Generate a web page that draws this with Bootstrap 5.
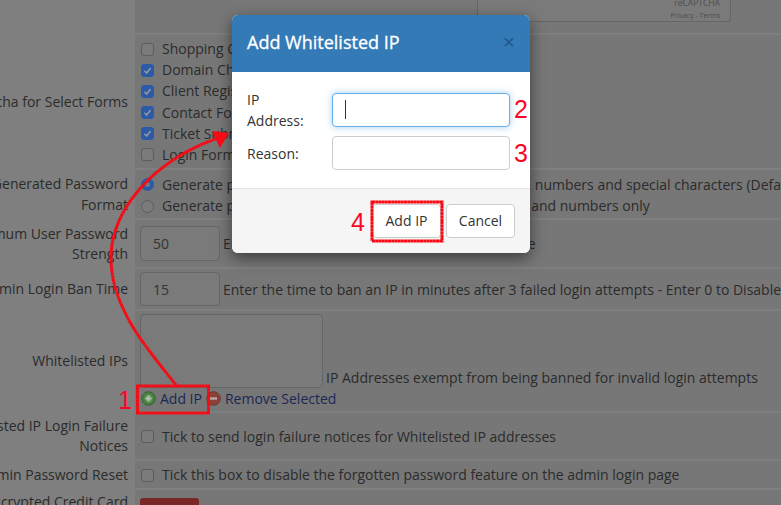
<!DOCTYPE html>
<html lang="en">
<head>
<meta charset="utf-8">
<title>Add Whitelisted IP</title>
<link rel="stylesheet" href="https://cdn.jsdelivr.net/npm/bootstrap@5.3.0/dist/css/bootstrap.min.css">
<style>
html,body{height:505px;overflow:hidden;background:#7f7f7f}
body{font-family:"Open Sans","Liberation Sans",sans-serif;font-size:14px;line-height:21px;color:#2b2b2b}
.stage{position:relative;width:781px;height:505px;overflow:hidden}
.cfg{margin-left:-72px;width:900px}
.cfg-row{display:flex;align-items:stretch}
.cfg-label{width:207px;flex:none;text-align:right;padding:0 7px 2px 0;line-height:20px;white-space:nowrap;align-self:center}
.cfg-field{flex:1;background:#777;border-bottom:2px solid #7f7f7f;padding-left:5px;display:flex;flex-direction:column;justify-content:center;white-space:nowrap}
.rh0{height:35px}.rh1{height:135px}.rh2{height:50px}.rh3{height:49px}.rh4{height:42px}.rh5{height:102px}.rh6{height:48px}.rh7{height:29px}
.rh2 .cfg-field{padding-top:2px}
.rh2 .cfg-label{line-height:21px}
.optline{display:flex;align-items:center;height:21.2px}
.box{width:13px;height:13px;flex:none;margin:1px 8px 0 1px;border:1px solid #5c5c5c;border-radius:3px;background:#7b7b7b}
.box.radio{border-radius:50%}
.box.on{background:#2a5aa8;border-color:#2a5aa8;display:flex;align-items:center;justify-content:center}
.box.radio.on::after{content:"";width:5px;height:5px;border-radius:50%;background:#777}
.fake-input{border:1px solid #666;border-radius:4px;background:#7a7a7a;color:#333;padding:0 12px;display:flex;align-items:center;flex:none}
.num-input{width:80px}
.rh3 .num-input{height:35px}.rh4 .num-input{height:34px}
.ip-area{width:183px;height:74px}
.after-input{margin-left:3px}
.rc-box{width:254px;height:23px;margin:0 0 12px 337px;border:1px solid #666;border-top:0;border-radius:0 0 4px 4px;background:#7a7a7a;color:#4d4d4d;text-align:right;padding-right:10px}
.rc-name{font-size:8.5px;line-height:10px;display:block;margin-top:-2px}
.rc-links{font-size:7px;line-height:10px;display:block;margin-top:3px}
.lnk{color:#1b2856;text-decoration:none}
.lnk-first{margin-left:1px}
.card-label{align-self:flex-start;padding-top:2px}
.pay-btn{width:59px;height:20px;background:#7a2826;border-radius:3px 3px 0 0}
.dlg.modal-content{position:absolute;left:232px;top:15px;width:298px;height:238px;border:0;border-radius:6px;background:#fff;box-shadow:0 5px 15px rgba(0,0,0,.5);color:#333;overflow:hidden}
.dlg .modal-header{background:#337ab7;height:57px;padding:0 15px 4px;border:0;border-radius:0;color:#fff}
.dlg .modal-title{font-size:18px;font-weight:500;line-height:24px;margin:0;-webkit-text-stroke:.3px #fff}
.dlg-x{color:#23568a;font-size:21px;line-height:21px;background:none;border:0;padding:0;font-family:"Liberation Sans",sans-serif}
.dlg .modal-body{padding:21px 20px 0 15px;height:116px;flex:none}
.dlg-line{display:flex;align-items:center;height:34px;margin-bottom:9px}
.dlg-line label{width:85px;flex:none;line-height:21px;margin:-2px 0}
.dlg-line .form-control{width:178px;height:34px;flex:none;border:1px solid #ccc;border-radius:4px;box-shadow:none}
.dlg-line .form-control.lit{border-color:#66afe9;box-shadow:0 0 7px rgba(102,175,233,.6)}
.dlg .modal-footer{background:#f5f5f5;border-top:1px solid #e5e5e5;height:65px;padding:0 15px;gap:5px;flex-wrap:nowrap;border-radius:0}
.dlg .btn{width:69px;height:34px;padding:0;margin:0;background:#fff;border:1px solid #ccc;border-radius:4px;color:#333;font-size:14px;line-height:32px}
.ink{position:absolute;left:0;top:0;width:781px;height:505px;pointer-events:none}
.ink text{font-family:"Liberation Sans",sans-serif;font-size:25px;fill:#fb0726}
</style>
</head>
<body>
<div class="stage">
  <div class="cfg">
    <div class="cfg-row rh0">
      <div class="cfg-label"></div>
      <div class="cfg-field justify-content-start">
        <div class="rc-box"><span class="rc-name">reCAPTCHA</span><span class="rc-links">Privacy - Terms</span></div>
      </div>
    </div>
    <div class="cfg-row rh1">
      <div class="cfg-label">Captcha for Select Forms</div>
      <div class="cfg-field">
        <div class="optline"><span class="box"></span>Shopping Cart</div>
        <div class="optline"><span class="box on"><svg width="9" height="9" viewBox="0 0 9 9"><path d="M1.5 4.8 3.6 7 7.6 2" fill="none" stroke="#999" stroke-width="1.5"/></svg></span>Domain Checker</div>
        <div class="optline"><span class="box on"><svg width="9" height="9" viewBox="0 0 9 9"><path d="M1.5 4.8 3.6 7 7.6 2" fill="none" stroke="#999" stroke-width="1.5"/></svg></span>Client Registration</div>
        <div class="optline"><span class="box on"><svg width="9" height="9" viewBox="0 0 9 9"><path d="M1.5 4.8 3.6 7 7.6 2" fill="none" stroke="#999" stroke-width="1.5"/></svg></span>Contact Form</div>
        <div class="optline"><span class="box on"><svg width="9" height="9" viewBox="0 0 9 9"><path d="M1.5 4.8 3.6 7 7.6 2" fill="none" stroke="#999" stroke-width="1.5"/></svg></span>Ticket Submission</div>
        <div class="optline"><span class="box"></span>Login Form</div>
      </div>
    </div>
    <div class="cfg-row rh2">
      <div class="cfg-label">Generated Password<br>Format</div>
      <div class="cfg-field">
        <div class="optline"><span class="box radio on"></span>Generate passwords containing a combination of letters, numbers and special characters (Default)</div>
        <div class="optline"><span class="box radio"></span>Generate passwords containing a combination of letters and numbers only</div>
      </div>
    </div>
    <div class="cfg-row rh3">
      <div class="cfg-label">Minimum User Password<br>Strength</div>
      <div class="cfg-field">
        <div class="d-flex align-items-center"><span class="fake-input num-input">50</span><span class="after-input">Enter the minimum strength - Enter 0 to Disable</span></div>
      </div>
    </div>
    <div class="cfg-row rh4">
      <div class="cfg-label">Admin Login Ban Time</div>
      <div class="cfg-field">
        <div class="d-flex align-items-center"><span class="fake-input num-input">15</span><span class="after-input">Enter the time to ban an IP in minutes after 3 failed login attempts - Enter 0 to Disable</span></div>
      </div>
    </div>
    <div class="cfg-row rh5">
      <div class="cfg-label">Whitelisted IPs</div>
      <div class="cfg-field">
        <div class="d-flex align-items-end"><span class="fake-input ip-area"></span><span class="after-input">IP Addresses exempt from being banned for invalid login attempts</span></div>
        <div class="d-flex align-items-center">
          <a class="lnk lnk-first d-flex align-items-center" href="#"><svg class="me-1" width="15" height="15" viewBox="0 0 15 15"><circle cx="7.5" cy="7.5" r="6.8" fill="#4a7d40" stroke="#39652f"/><circle cx="7.5" cy="7.5" r="4" fill="#5f9454"/><path d="M7.5 4.5v6M4.5 7.5h6" stroke="#b3c2af" stroke-width="2"/></svg>Add IP</a>
          <a class="lnk d-flex align-items-center ms-1" href="#"><svg class="me-1" width="15" height="15" viewBox="0 0 15 15"><circle cx="7.5" cy="7.5" r="6.8" fill="#8c4138" stroke="#74352e"/><path d="M4 7.5h7" stroke="#b8a8a5" stroke-width="2.4"/></svg>Remove Selected</a>
        </div>
      </div>
    </div>
    <div class="cfg-row rh6">
      <div class="cfg-label">Whitelisted IP Login Failure<br>Notices</div>
      <div class="cfg-field"><div class="optline"><span class="box"></span>Tick to send login failure notices for Whitelisted IP addresses</div></div>
    </div>
    <div class="cfg-row rh7">
      <div class="cfg-label">Admin Password Reset</div>
      <div class="cfg-field"><div class="optline"><span class="box"></span>Tick this box to disable the forgotten password feature on the admin login page</div></div>
    </div>
    <div class="cfg-row">
      <div class="cfg-label card-label">Encrypted Credit Card</div>
      <div class="cfg-field justify-content-start pt-2"><div class="pay-btn"></div></div>
    </div>
  </div>

  <div class="modal-content dlg">
    <div class="modal-header justify-content-between">
      <h5 class="modal-title">Add Whitelisted IP</h5>
      <button type="button" class="dlg-x">×</button>
    </div>
    <div class="modal-body">
      <div class="dlg-line"><label>IP<br>Address:</label><input class="form-control lit" type="text"></div>
      <div class="dlg-line"><label>Reason:</label><input class="form-control" type="text"></div>
    </div>
    <div class="modal-footer justify-content-end">
      <button type="button" class="btn">Add IP</button>
      <button type="button" class="btn">Cancel</button>
    </div>
  </div>

  <svg class="ink" viewBox="0 0 781 505">
    <line x1="345.5" y1="100" x2="345.5" y2="119" stroke="#333"/>
    <g fill="none" stroke="#f80a14" stroke-width="3" stroke-dasharray="3 .2">
      <rect x="137.5" y="386" width="71" height="27"/>
      <rect x="372" y="202" width="70" height="39"/>
      <path d="M176 385C160 365 145 346 136 332 122 310 111 285 111 258 111 225 130 195 157 172 178 155 195 146 221 137"/>
    </g>
    <path d="M229 133 212 131 220 148Z" fill="#f80a14"/>
    <text x="118" y="409">1</text>
    <text x="514" y="118">2</text>
    <text x="514" y="162">3</text>
    <text x="351" y="231">4</text>
  </svg>
</div>
<script src="https://cdn.jsdelivr.net/npm/bootstrap@5.3.0/dist/js/bootstrap.bundle.min.js"></script>
</body>
</html>
